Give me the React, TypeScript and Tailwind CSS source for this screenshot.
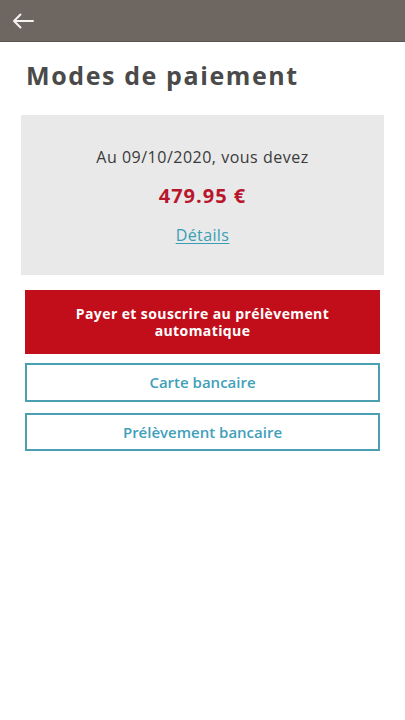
export default function App() {
  return (
    <div className="min-h-[720px] bg-white font-['Open_Sans',sans-serif]">
      <header className="h-[42px] bg-[#6e6661] border-b border-[#5a534f] flex items-center px-[12px]">
        <svg width="22" height="16" viewBox="0 0 22 16" fill="none" stroke="#f5f3f2" strokeWidth="2" strokeLinecap="round" strokeLinejoin="round">
          <path d="M21 8H2M8.5 1.5L2 8l6.5 6.5" />
        </svg>
      </header>

      <h1 className="px-[26px] pt-[15px] text-[25px] leading-[36px] font-bold text-[#4a4a4a] tracking-[1.6px]">
        Modes de paiement
      </h1>

      <div className="mx-[21px] mt-[22px] h-[160px] bg-[#e9e9e9] flex flex-col items-center pt-[31px]">
        <p className="text-[16px] leading-[22px] text-[#3a3a3a] tracking-[0.5px]">Au 09/10/2020, vous devez</p>
        <p className="mt-[16px] text-[20px] leading-[24px] font-bold text-[#b8162c] tracking-[1px]">479.95 €</p>
        <a href="#" className="mt-[16px] text-[16px] leading-[22px] text-[#3a9fb6] underline underline-offset-2 tracking-[0.4px]">Détails</a>
      </div>

      <div className="mx-[25px] mt-[15px] flex flex-col">
        <button className="h-[64px] bg-[#c20e1a] text-white text-[14px] leading-[17px] font-bold px-[40px] tracking-[0.4px]">
          Payer et souscrire au prélèvement automatique
        </button>
        <button className="mt-[9px] h-[39px] border-2 border-[#4a9fb3] text-[#3fa0ba] text-[15px] font-semibold">
          Carte bancaire
        </button>
        <button className="mt-[11px] h-[38px] border-2 border-[#4a9fb3] text-[#3fa0ba] text-[15px] font-semibold">
          Prélèvement bancaire
        </button>
      </div>
    </div>
  );
}
